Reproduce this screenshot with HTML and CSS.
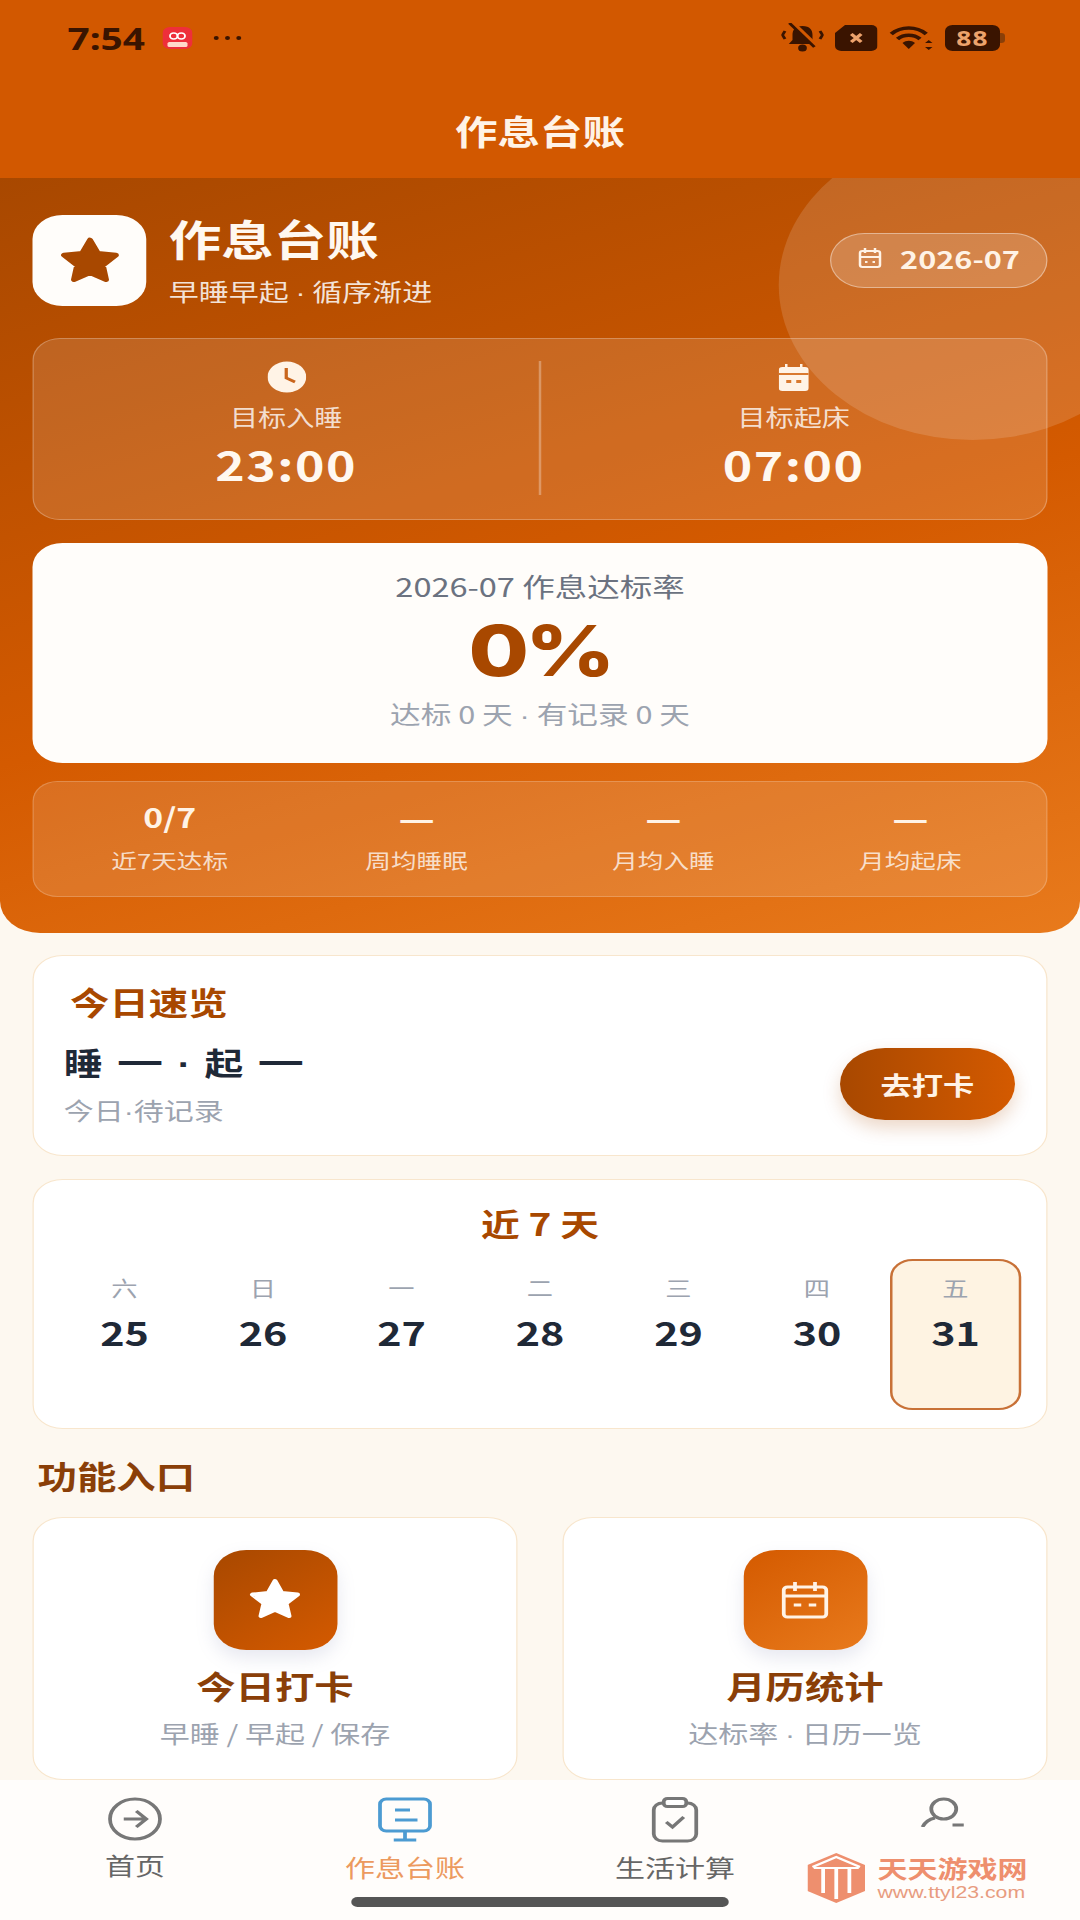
FILE: index.html

```html
<!DOCTYPE html>
<html>
<head>
  <meta charset="utf-8">
  <link rel="stylesheet" href="styles.css">
</head>
<body>
  <div class="page">
    <div class="topbar">
      <div class="status">
        <span class="clock">7:54</span>
        <svg class="app-dot" width="24" height="22" viewBox="0 0 24 22">
          <rect width="24" height="22" rx="6" fill="#ee2f3a"/>
          <rect x="4" y="15" width="16" height="5" rx="1.5" fill="#ffd9c9"/>
          <circle cx="9" cy="9" r="3" fill="none" stroke="#fff" stroke-width="1.5"/>
          <circle cx="15" cy="9" r="3" fill="none" stroke="#fff" stroke-width="1.5"/>
        </svg>
        <span class="dots"><i></i><i></i><i></i></span>
        <span class="status-right">
          <svg width="34" height="30" viewBox="0 0 34 30">
            <path d="M17 3c-6 0-8 4-8 9v5l-3 4h22l-3-4v-5c0-5-2-9-8-9z" fill="#3a1400"/>
            <circle cx="17" cy="25" r="3.500" fill="#3a1400"/>
            <path d="M9 0l20 24" stroke="#d25800" stroke-width="4"/>
            <path d="M6.500 0l20 24" stroke="#3a1400" stroke-width="2.600"/>
            <path d="M3 8l-2 4 2 4M31 8l2 4-2 4" fill="none" stroke="#3a1400" stroke-width="2.400"/>
          </svg>
          <svg width="34" height="26" viewBox="0 0 34 26">
            <path d="M8 0h21a5 5 0 0 1 5 5v16a5 5 0 0 1-5 5H5a5 5 0 0 1-5-5V8z" fill="#3a1400"/>
            <path d="M13 9l8 8M21 9l-8 8" stroke="#eda36c" stroke-width="3"/>
          </svg>
          <svg width="36" height="26" viewBox="0 0 36 26">
            <path d="M2 9c8-8 20-8 28 0M7 14c5-5 13-5 18 0" fill="none" stroke="#3a1400" stroke-width="3.600"/>
            <path d="M11 18c3-3 7-3 10 0l-5 6z" fill="#3a1400"/>
            <path d="M32 15l3 3h-6zM32 25l3-3h-6z" fill="#3a1400"/>
          </svg>
          <span class="battery">88</span>
        </span>
      </div>
      <div class="app-title">作息台账</div>
    </div>

    <div class="hero">
      <div class="hero-circle"></div>
      <div class="hero-top">
        <div class="hero-logo">
          <svg width="56" height="54" viewBox="0 0 24 23">
            <path d="M12 2.500l2.700 5.700 6.200.8-4.500 4.300 1.100 6.200-5.500-3-5.500 3 1.100-6.200L3.100 9l6.200-.8z" fill="#a84800" stroke="#a84800" stroke-width="2" stroke-linejoin="round"/>
          </svg>
        </div>
        <div class="hero-text">
          <div class="hero-title">作息台账</div>
          <div class="hero-sub">早睡早起 <span class="dot">·</span> 循序渐进</div>
        </div>
        <div class="month-pill">
          <svg width="20" height="22" viewBox="0 0 20 22" fill="none" stroke="#fff3e6" stroke-width="2">
            <rect x="2" y="4" width="16" height="16" rx="2"/>
            <path d="M2 10h16M6 1v5M14 1v5M6 15h2M12 15h2"/>
          </svg>
          <span>2026-07</span>
        </div>
      </div>

      <div class="target-card">
        <div class="target-col">
          <svg width="31" height="32" viewBox="0 0 31 32">
            <circle cx="15.500" cy="16" r="15.500" fill="#fff3e6"/>
            <path d="M15 7v10l7 4" fill="none" stroke="#c9651c" stroke-width="2.600"/>
          </svg>
          <div class="target-label">目标入睡</div>
          <div class="target-time">23:00</div>
        </div>
        <div class="target-divider"></div>
        <div class="target-col">
          <svg width="24" height="32" viewBox="0 0 24 32">
            <path d="M5 3h2v3h10V3h2v3h2a3 3 0 0 1 3 3v18a3 3 0 0 1-3 3H3a3 3 0 0 1-3-3V9a3 3 0 0 1 3-3h2z" fill="#fff3e6"/>
            <path d="M0 13h24" stroke="#d9792f" stroke-width="2"/>
            <rect x="6" y="19" width="4" height="3" fill="#d9792f"/>
            <rect x="14" y="19" width="4" height="3" fill="#d9792f"/>
          </svg>
          <div class="target-label">目标起床</div>
          <div class="target-time">07:00</div>
        </div>
      </div>

      <div class="rate-card">
        <div class="rate-label">2026-07 作息达标率</div>
        <div class="rate-value">0%</div>
        <div class="rate-sub">达标 0 天 <span class="dot">·</span> 有记录 0 天</div>
      </div>

      <div class="stats">
        <div class="stat-item">
          <div class="stat-value">0/7</div>
          <div class="stat-label">近7天达标</div>
        </div>
        <div class="stat-item">
          <div class="stat-value stat-dash">—</div>
          <div class="stat-label">周均睡眠</div>
        </div>
        <div class="stat-item">
          <div class="stat-value stat-dash">—</div>
          <div class="stat-label">月均入睡</div>
        </div>
        <div class="stat-item">
          <div class="stat-value stat-dash">—</div>
          <div class="stat-label">月均起床</div>
        </div>
      </div>
    </div>

    <div class="content">
      <div class="card today-card">
        <div class="today-title">今日速览</div>
        <div class="today-row">
          <div>
            <div class="today-main">睡 <span class="today-dash">—</span> <span class="dot">·</span> 起 <span class="today-dash">—</span></div>
            <div class="today-sub">今日<span class="dot">·</span>待记录</div>
          </div>
          <div class="btn-checkin">去打卡</div>
        </div>
      </div>

      <div class="card week-card">
        <div class="week-title">近 7 天</div>
        <div class="week-grid">
          <div class="day"><div class="day-name">六</div><div class="day-num">25</div></div>
          <div class="day"><div class="day-name">日</div><div class="day-num">26</div></div>
          <div class="day"><div class="day-name">一</div><div class="day-num">27</div></div>
          <div class="day"><div class="day-name">二</div><div class="day-num">28</div></div>
          <div class="day"><div class="day-name">三</div><div class="day-num">29</div></div>
          <div class="day"><div class="day-name">四</div><div class="day-num">30</div></div>
          <div class="day day-today"><div class="day-name">五</div><div class="day-num">31</div></div>
        </div>
      </div>

      <div class="section-title">功能入口</div>
      <div class="feature-grid">
        <div class="card feature">
          <div class="feature-icon feature-icon-dark">
            <svg width="48" height="50" viewBox="0 0 24 25">
              <path d="M12 3l2.700 6 6.300.8-4.600 4.400 1.200 6.300-5.600-3.100-5.600 3.100 1.200-6.300L3 9.800l6.300-.8z" fill="#fff" stroke="#fff" stroke-width="2" stroke-linejoin="round"/>
            </svg>
          </div>
          <div class="feature-title">今日打卡</div>
          <div class="feature-sub">早睡 / 早起 / 保存</div>
        </div>
        <div class="card feature">
          <div class="feature-icon feature-icon-light">
            <svg width="40" height="38" viewBox="0 0 40 38" fill="none" stroke="#fff3e6" stroke-width="3">
              <rect x="3" y="6" width="34" height="30" rx="3"/>
              <path d="M3 15h34M12 1v9M28 1v9M11 24h6M23 24h6"/>
            </svg>
          </div>
          <div class="feature-title">月历统计</div>
          <div class="feature-sub">达标率 <span class="dot">·</span> 日历一览</div>
        </div>
      </div>
    </div>

    <div class="nav">
      <div class="nav-items">
        <div class="nav-item">
          <svg width="44" height="44" viewBox="0 0 44 44" fill="none" stroke="#777" stroke-width="3">
            <circle cx="22" cy="22" r="20"/>
            <path d="M13 22h17M23 14l8 8-8 8"/>
          </svg>
          <div class="nav-label">首页</div>
        </div>
        <div class="nav-item nav-item-active">
          <svg width="44" height="46" viewBox="0 0 44 46" fill="none" stroke="#4c9bd2" stroke-width="3">
            <rect x="2" y="2" width="40" height="32" rx="5"/>
            <path d="M14 13h12M14 23h18M22 34v8M13 43h18"/>
          </svg>
          <div class="nav-label">作息台账</div>
        </div>
        <div class="nav-item">
          <svg width="40" height="46" viewBox="0 0 40 46" fill="none" stroke="#777" stroke-width="3">
            <rect x="3" y="6" width="34" height="38" rx="7"/>
            <rect x="11" y="1.500" width="18" height="8" rx="3" fill="#fff"/>
            <path d="M13 25l5 5 9-10"/>
          </svg>
          <div class="nav-label">生活计算</div>
        </div>
        <div class="nav-item">
          <svg width="40" height="30" viewBox="0 0 40 30" fill="none" stroke="#777" stroke-width="3">
            <circle cx="19" cy="12" r="10"/>
            <path d="M2 30c2-5 6-8 10-9M26 28h9"/>
          </svg>
        </div>
      </div>
      <div class="home-bar"></div>
      <div class="watermark">
        <svg width="46" height="50" viewBox="0 0 46 50">
          <path d="M23 0l23 12v26L23 50 0 38V12z" fill="#ee8f6e"/>
          <path d="M4 14L23 4l19 10" fill="none" stroke="#fff" stroke-width="2"/>
          <path d="M5 15h36" stroke="#fff" stroke-width="2"/>
          <rect x="11" y="15" width="3" height="25" fill="#fff"/>
          <rect x="21.500" y="15" width="3" height="31" fill="#fff"/>
          <rect x="32" y="15" width="3" height="25" fill="#fff"/>
        </svg>
        <div>
          <div class="watermark-name">天天游戏网</div>
          <div class="watermark-url">www.ttyl23.com</div>
        </div>
      </div>
    </div>
  </div>
</body>
</html>
```

FILE: styles.css

```css
* {
  box-sizing: border-box;
}

html,
body {
  margin: 0;
  height: 1920px;
  overflow: hidden;
  background: #fdf8f0;
}

/* the capture is squeezed: everything is 1.25x wider than tall */
.page {
  width: 864px;
  height: 1920px;
  display: flex;
  flex-direction: column;
  overflow: hidden;
  transform: scaleX(1.25);
  transform-origin: 0 0;
  font-family: "Noto Sans CJK SC", "Noto Sans", sans-serif;
  background: #fdf8f0;
}

/* narrow middle dot, the CJK one is full width */
.dot {
  font-family: "Liberation Sans", sans-serif;
}

.topbar {
  height: 178px;
  flex: none;
  background: #d25800;
}

.status {
  height: 84px;
  padding: 0 64px 8px 54px;
  display: flex;
  align-items: center;
  color: #3a1400;
}

.clock {
  font-family: "Noto Sans", sans-serif;
  font-size: 31px;
  font-weight: 700;
  margin-right: 14px;
}

.dots {
  display: flex;
  gap: 5px;
  margin-left: 17px;
}

.dots i {
  width: 4px;
  height: 4px;
  border-radius: 50%;
  background: #3a1400;
}

.status-right {
  margin-left: auto;
  display: flex;
  align-items: center;
  gap: 9px;
}

.battery {
  position: relative;
  width: 44px;
  height: 26px;
  border-radius: 6px;
  background: #3a1400;
  color: #eda36c;
  font-family: "Noto Sans", sans-serif;
  font-size: 21px;
  font-weight: 700;
  line-height: 26px;
  text-align: center;
  letter-spacing: 1px;
}

.battery::after {
  content: "";
  position: absolute;
  right: -4px;
  top: 8px;
  width: 4px;
  height: 10px;
  border-radius: 0 3px 3px 0;
  background: #8a3f08;
}

.app-title {
  height: 94px;
  line-height: 94px;
  text-align: center;
  font-size: 34px;
  font-weight: 700;
  color: #fff3e6;
}

.hero {
  position: relative;
  height: 755px;
  flex: none;
  padding: 37px 26px 36px;
  overflow: hidden;
  border-radius: 0 0 32px 32px;
  background: linear-gradient(160deg, #a84800 0%, #d45a00 55%, #e87a1c 100%);
  color: #fff;
}

.hero-circle {
  position: absolute;
  top: -48px;
  right: -69px;
  width: 310px;
  height: 310px;
  border-radius: 50%;
  background: rgba(255, 255, 255, 0.14);
}

.hero-top {
  position: relative;
  display: flex;
  align-items: center;
  height: 91px;
}

.hero-logo {
  width: 91px;
  height: 91px;
  display: flex;
  align-items: center;
  justify-content: center;
  border-radius: 24px;
  background: #fffdfa;
}

.hero-text {
  margin-left: 18px;
  margin-bottom: 2px;
}

.hero-title {
  font-size: 42px;
  font-weight: 700;
  line-height: 54px;
  color: #fff8f0;
}

.hero-sub {
  margin-top: 10px;
  font-size: 24px;
  line-height: 32px;
  color: rgba(255, 255, 255, 0.85);
}

.month-pill {
  margin-left: auto;
  width: 174px;
  height: 55px;
  padding-bottom: 5px;
  display: flex;
  align-items: center;
  justify-content: center;
  gap: 14px;
  border: 1.5px solid rgba(255, 255, 255, 0.4);
  border-radius: 28px;
  background: rgba(255, 255, 255, 0.18);
  font-size: 24.500px;
  font-weight: 700;
  color: #fff3e6;
}

.target-card {
  position: relative;
  height: 182px;
  margin-top: 32px;
  display: flex;
  border: 1.5px solid rgba(255, 255, 255, 0.25);
  border-radius: 22px;
  background: rgba(255, 255, 255, 0.13);
}

.target-col {
  flex: 1;
  padding-top: 22px;
  display: flex;
  flex-direction: column;
  align-items: center;
}

.target-divider {
  width: 2px;
  margin: 22px 0 24px;
  background: rgba(255, 255, 255, 0.3);
}

.target-label {
  margin-top: 8px;
  font-size: 22.500px;
  line-height: 30px;
  color: rgba(255, 255, 255, 0.8);
}

.target-time {
  margin-top: 11px;
  font-size: 40px;
  font-weight: 700;
  line-height: 44px;
  letter-spacing: 1.200px;
  color: #fff8f0;
}

.rate-card {
  height: 220px;
  margin-top: 23px;
  padding-top: 26px;
  border-radius: 24px;
  background: #fffdfa;
  text-align: center;
}

.rate-label {
  font-size: 26px;
  line-height: 34px;
  color: #6b7280;
}

.rate-value {
  margin-top: 5px;
  font-family: Inter, sans-serif;
  font-size: 70px;
  font-weight: 800;
  line-height: 86px;
  letter-spacing: -3px;
  color: #a84800;
}

.rate-sub {
  margin-top: 4px;
  font-size: 24.500px;
  line-height: 32px;
  color: #9ca3af;
}

.stats {
  height: 116px;
  margin-top: 18px;
  padding: 17px 10px 0;
  display: grid;
  grid-template-columns: repeat(4, 1fr);
  border: 1.5px solid rgba(255, 255, 255, 0.2);
  border-radius: 20px;
  background: rgba(255, 255, 255, 0.12);
  text-align: center;
}

.stat-value {
  font-size: 27px;
  font-weight: 700;
  line-height: 36px;
  color: #fff3e6;
}

.stat-dash {
  font-size: 32px;
}

.stat-label {
  margin-top: 11px;
  font-size: 20.500px;
  line-height: 28px;
  color: rgba(255, 255, 255, 0.75);
}

.content {
  flex: 1;
  min-height: 0;
  padding: 22px 26px 0;
}

.card {
  border: 1.5px solid #f8e6cd;
  border-radius: 24px;
  background: #fff;
}

.today-card {
  height: 201px;
  padding: 25px 25px 0 24px;
}

.today-title {
  margin-left: 5px;
  font-size: 31.500px;
  font-weight: 700;
  line-height: 40px;
  color: #a84800;
}

.today-row {
  margin-top: 22px;
  display: flex;
  justify-content: space-between;
  align-items: flex-start;
}

.today-main {
  height: 40px;
  margin-top: -1px;
  font-size: 31px;
  font-weight: 700;
  line-height: 40px;
  word-spacing: 4px;
  color: #1f2937;
}

.today-dash {
  font-size: 42px;
  line-height: 30px;
}

.today-sub {
  margin-top: 12px;
  font-size: 24px;
  line-height: 32px;
  color: #9ca3af;
}

.btn-checkin {
  width: 140px;
  height: 72px;
  margin-top: 5px;
  border-radius: 36px;
  background: linear-gradient(90deg, #a84800, #d45a00);
  box-shadow: 0 8px 16px rgba(168, 72, 0, 0.22);
  color: #fff3e6;
  font-size: 25px;
  font-weight: 700;
  line-height: 72px;
  text-align: center;
}

.week-card {
  height: 250px;
  margin-top: 23px;
  padding: 23px 20px 0;
}

.week-title {
  font-size: 31px;
  font-weight: 700;
  line-height: 40px;
  text-align: center;
  color: #a84800;
}

.week-grid {
  margin-top: 16px;
  display: grid;
  grid-template-columns: repeat(7, 1fr);
  gap: 5.600px;
}

.day {
  height: 151px;
  padding-top: 12px;
  border: 2px solid transparent;
  border-radius: 18px;
  text-align: center;
}

.day-today {
  border-color: #c87137;
  background: #fef3e2;
}

.day-name {
  font-size: 21px;
  line-height: 28px;
  color: #9ca3af;
}

.day-num {
  margin-top: 9px;
  font-size: 33px;
  font-weight: 700;
  line-height: 44px;
  color: #1f2937;
}

.section-title {
  margin: 26px 0 22px 4px;
  font-size: 31.500px;
  font-weight: 700;
  line-height: 40px;
  color: #8a3f08;
}

.feature-grid {
  display: grid;
  grid-template-columns: 1fr 1fr;
  gap: 36px;
}

.feature {
  height: 263px;
  padding-top: 32px;
  display: flex;
  flex-direction: column;
  align-items: center;
}

.feature-icon {
  width: 99px;
  height: 100px;
  display: flex;
  align-items: center;
  justify-content: center;
  border-radius: 26px;
  box-shadow: 0 8px 16px rgba(120, 130, 170, 0.18);
}

.feature-icon-dark {
  background: linear-gradient(145deg, #a84800, #d45a00);
}

.feature-icon-light {
  background: linear-gradient(145deg, #d45a00, #e87a1c);
}

.feature-title {
  margin-top: 15px;
  font-size: 31.500px;
  font-weight: 700;
  line-height: 40px;
  color: #8a3f08;
}

.feature-sub {
  margin-top: 12px;
  font-size: 24px;
  line-height: 32px;
  color: #9ca3af;
}

.nav {
  position: relative;
  height: 140px;
  flex: none;
  background: #fffdfb;
}

.nav-items {
  height: 117px;
  padding-top: 17px;
  display: grid;
  grid-template-columns: repeat(4, 1fr);
}

.nav-item {
  display: flex;
  flex-direction: column;
  align-items: center;
}

.nav-label {
  margin-top: 8px;
  font-size: 24px;
  line-height: 32px;
  color: #666;
}

.nav-item-active .nav-label {
  color: #ec9a5f;
}

.home-bar {
  width: 302px;
  height: 10px;
  margin: 0 auto;
  border-radius: 5px;
  background: #555;
}

/* site stamp burned into the capture */
.watermark {
  position: absolute;
  left: 646px;
  top: 73px;
  display: flex;
  gap: 10px;
  align-items: flex-start;
}

.watermark-name {
  font-size: 24px;
  font-weight: 700;
  line-height: 30px;
  color: #ee8f6e;
}

.watermark-url {
  font-family: "Liberation Sans", sans-serif;
  font-size: 17px;
  line-height: 20px;
  color: #e89c80;
}
```
